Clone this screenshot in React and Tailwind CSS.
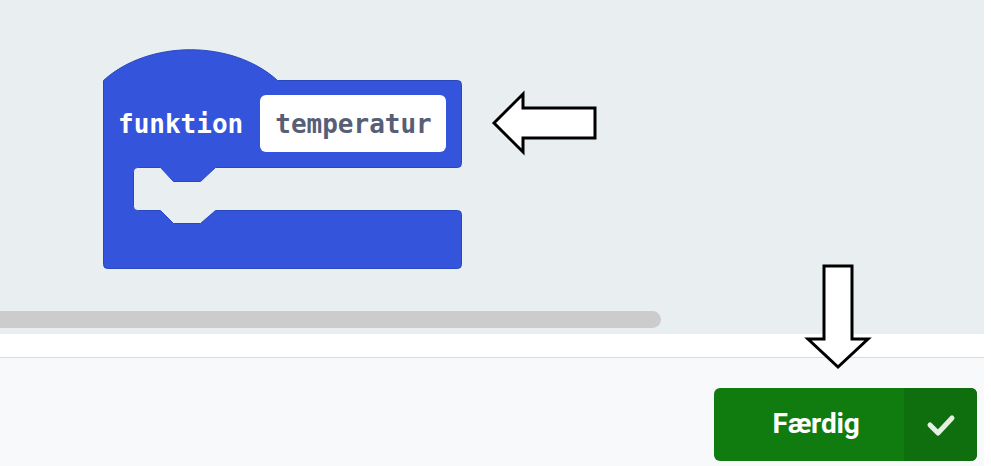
import React from "react";

function Block() {
  const d =
    "M0,40 C45,-1 129,-1 174,40 L354,40 Q358,40 358,44 L358,123 Q358,127 354,127 L112,127 L97,141 L70,141 L57,127 L34,127 Q30,127 30,131 L30,166 Q30,170 34,170 L57,170 L70,183 L97,183 L112,170 L354,170 Q358,170 358,174 L358,224 Q358,228 354,228 L4,228 Q0,228 0,224 Z";
  return (
    <div className="absolute left-[103px] top-[40px] w-[359px] h-[229px]">
      <svg className="absolute inset-0" width="359" height="229" viewBox="-0.5 -0.5 359 229">
        <path d={d} fill="#3455db" stroke="#2b47be" strokeWidth="1" />
      </svg>
      <div className="relative flex items-center pt-[55px] pl-[15px] gap-[17px]">
        <span className="text-white font-bold text-[26px] leading-none" style={{ fontFamily: '"DejaVu Sans Mono", monospace' }}>
          funktion
        </span>
        <div className="w-[186px] h-[57px] bg-white rounded-[6px] flex items-center pl-[15px]">
          <span className="text-[#575e75] font-bold text-[26px] leading-none" style={{ fontFamily: '"DejaVu Sans Mono", monospace' }}>
            temperatur
          </span>
        </div>
      </div>
    </div>
  );
}

export default function App() {
  return (
    <div className="relative w-[991px] h-[466px] flex bg-white overflow-hidden">
      <div className="w-[984px] flex flex-col">
        <div className="relative h-[334px] bg-[#e9eef0]">
          <Block />
          <div className="absolute left-0 top-[311px] w-[661px] h-[17px] bg-[#cccccc] rounded-r-full" />
        </div>
        <div className="h-[24px] bg-white border-b border-[#d9dbdd]" />
        <div className="flex-1 bg-[#f8f9fa] flex justify-end items-start pt-[30px] pr-[7px]">
          <div className="flex w-[263px] h-[73px] rounded-[6px] overflow-hidden bg-[#107c10]">
            <div className="w-[190px] flex items-center justify-center pl-[14px] pb-[2px]">
              <span className="text-white font-bold text-[28px] leading-none tracking-[-0.2px]" style={{ fontFamily: 'Roboto, "Liberation Sans", sans-serif' }}>
                Færdig
              </span>
            </div>
            <div className="flex-1 bg-[#0f6f0f] flex items-center justify-center">
              <svg width="32" height="24" viewBox="0 0 32 24">
                <polyline points="5,12 13,20 27,5" fill="none" stroke="#e3f1e3" strokeWidth="5" strokeLinecap="round" strokeLinejoin="round" />
              </svg>
            </div>
          </div>
        </div>
      </div>
      <div className="flex-1 bg-white" />
      <svg className="absolute left-0 top-0 pointer-events-none" width="991" height="466">
        <polygon points="494,123 523,94 523,108 595,108 595,138 523,138 523,152" fill="#fff" stroke="#000" strokeWidth="3" strokeLinejoin="miter" />
        <polygon points="824,266 852,266 852,339 868,339 838,367 808,339 824,339" fill="#fff" stroke="#000" strokeWidth="3" strokeLinejoin="miter" />
      </svg>
    </div>
  );
}
